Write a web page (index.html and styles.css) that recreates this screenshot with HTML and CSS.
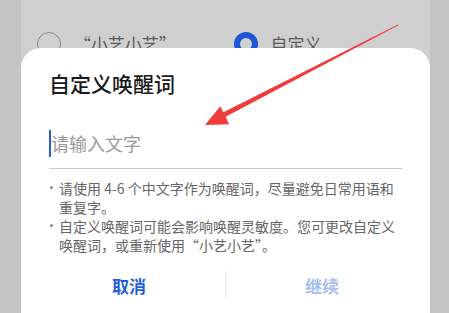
FILE: index.html
```html
<!DOCTYPE html>
<html lang="zh-CN">
<head>
    <meta charset="UTF-8">
    <meta name="viewport" content="width=device-width, initial-scale=1.0">
    <title>自定义唤醒词</title>
    <link rel="stylesheet" href="styles.css">
</head>
<body>
    <div class="page">
        <!-- 唤醒词选项（被弹窗遮住一半） -->
        <div class="choices">
            <div class="choice">
                <span class="radio"></span>
                <span class="choice-label">“小艺小艺”</span>
            </div>
            <div class="choice">
                <span class="radio checked"></span>
                <span class="choice-label">自定义</span>
            </div>
        </div>

        <!-- 弹窗 -->
        <div class="dialog">
            <h1 class="dialog-title">自定义唤醒词</h1>
            <div class="field">
                <span class="caret"></span>
                <span class="placeholder">请输入文字</span>
            </div>
            <ul class="notes">
                <li>请使用 4-6 个中文字作为唤醒词，尽量避免日常用语和重复字。</li>
                <li>自定义唤醒词可能会影响唤醒灵敏度。您可更改自定义唤醒词，或重新使用“小艺小艺”。</li>
            </ul>
            <div class="actions">
                <button type="button" class="btn">取消</button>
                <span class="divider"></span>
                <button type="button" class="btn disabled">继续</button>
            </div>
        </div>

        <!-- 红色箭头标注 -->
        <svg class="arrow" width="449" height="313" viewBox="0 0 449 313">
            <polygon fill="#f23b3b" points="398,24.4 398.4,25.3 224.2,117.6 221.9,113.1"/>
            <polygon fill="#f23b3b" points="205,125 220.3,106.3 224.5,114.5 229.1,124.3"/>
        </svg>
    </div>
</body>
</html>
```

FILE: styles.css
```css
* {
    box-sizing: border-box;
}
body {
    margin: 0;
    width: 449px;
    height: 313px;
    overflow: hidden;
    background-color: #c4c4c4;
    font-family: "Noto Sans CJK SC", "Noto Sans", sans-serif;
}
.page {
    position: relative;
    height: 313px;
    margin: 0 19px 0 21px;
    background-color: #cfcfcf;
}
.choices {
    display: flex;
    padding: 31px 0 0 16px;
}
.choice {
    display: flex;
    align-items: center;
    width: 204px;
}
.radio {
    width: 24px;
    height: 24px;
    border: 1.5px solid #8a8a8a;
    border-radius: 50%;
    margin-right: 13px;
}
.radio.checked {
    border: 6px solid #1f56d6;
}
.choice-label {
    font-size: 17px;
    color: #5a5a5a;
}
.dialog {
    position: absolute;
    top: 48px;
    left: 0;
    right: 0;
    bottom: 0;
    background-color: #fff;
    border-radius: 20px 20px 0 0;
    padding: 21px 28px 0 28px;
}
.dialog-title {
    margin: 0;
    font-size: 21px;
    line-height: 28px;
    font-weight: 500;
    color: #1a1a1a;
}
.field {
    display: flex;
    align-items: center;
    margin-top: 32px;
    padding-bottom: 11px;
    border-bottom: 1px solid #c8c8c8;
}
.caret {
    width: 2px;
    height: 27px;
    background-color: #2a5bd7;
}
.placeholder {
    font-size: 18px;
    line-height: 28px;
    color: #9a9a9a;
}
.notes {
    margin: 10px 0 0 0;
    padding: 0 0 0 10px;
    font-size: 14px;
    line-height: 19px;
    color: #666;
    width: 352px;
}
.notes li {
    list-style: none;
    position: relative;
}
.notes li::before {
    content: "";
    position: absolute;
    left: -9px;
    top: 7px;
    width: 3px;
    height: 3px;
    border-radius: 50%;
    background-color: #888;
}
.actions {
    display: flex;
    align-items: center;
    margin: 12px -16px 0 -16px;
    height: 36px;
}
.btn {
    flex: 1;
    background: none;
    border: none;
    font-family: inherit;
    font-size: 17px;
    font-weight: 700;
    color: #1f5fd8;
    padding: 0;
    cursor: pointer;
}
.btn.disabled {
    color: #a8c0ee;
}
.divider {
    width: 1px;
    height: 28px;
    background-color: #e6e6e6;
}
.arrow {
    position: absolute;
    top: 0;
    left: -21px;
    pointer-events: none;
}
```
